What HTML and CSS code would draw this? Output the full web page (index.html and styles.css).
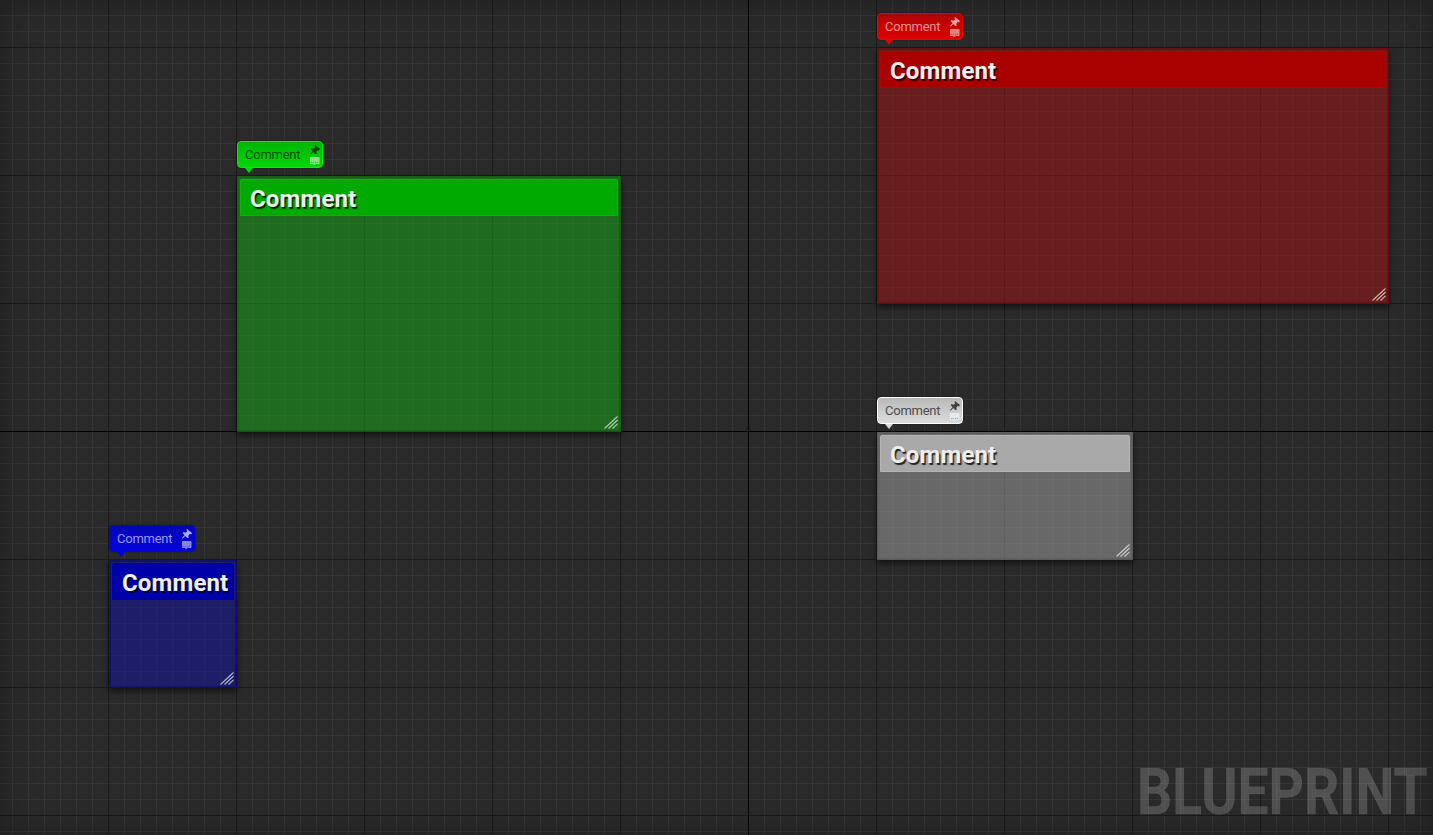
FILE: index.html
```html
<!DOCTYPE html>
<html lang="en">
<head>
<meta charset="utf-8">
<title>Blueprint</title>
<link rel="stylesheet" href="styles.css">
</head>
<body>
<svg class="symbols" aria-hidden="true">
  <symbol id="pin" viewBox="0 0 10 10"><path d="M5 0 10 4 9 5.500 7.800 5 6.500 6.300 6.500 9 5.300 9 3.300 7 .8 9.600 0 9.500.2 8.700 2.600 6.200.8 4.200 1 3.300 4 3.500 5.200 2.200 4.500.8Z" fill="currentColor"/></symbol>
  <symbol id="bubble" viewBox="0 0 10 9"><path d="M.5 0h8.500l.5.500v6l-.5.500H5L4 8.500 3 7H.5L0 6.500v-6Z" fill="currentColor"/><path d="M1 5.500h1.500m.7 0h1m.7 0h1m.7 0h1.500" stroke="#000" stroke-opacity=".3"/></symbol>
  <symbol id="grip" viewBox="0 0 14 13"><path d="M.5 12.500 13.500.5M4.500 12.500 13.500 4M8.500 12.500l5-4.700" fill="none" stroke="currentColor" stroke-width="1.150"/></symbol>
</svg>
<main class="graph">
  <section class="node green">
    <div class="tag"><span>Comment</span><div class="icons"><svg class="pin"><use href="#pin"/></svg><svg class="bubble"><use href="#bubble"/></svg></div></div>
    <div class="box"><h2>Comment</h2><svg class="grip"><use href="#grip"/></svg></div>
  </section>
  <section class="node red">
    <div class="tag"><span>Comment</span><div class="icons"><svg class="pin"><use href="#pin"/></svg><svg class="bubble"><use href="#bubble"/></svg></div></div>
    <div class="box"><h2>Comment</h2><svg class="grip"><use href="#grip"/></svg></div>
  </section>
  <section class="node gray">
    <div class="tag"><span>Comment</span><div class="icons"><svg class="pin"><use href="#pin"/></svg><svg class="bubble"><use href="#bubble"/></svg></div></div>
    <div class="box"><h2>Comment</h2><svg class="grip"><use href="#grip"/></svg></div>
  </section>
  <section class="node blue">
    <div class="tag"><span>Comment</span><div class="icons"><svg class="pin"><use href="#pin"/></svg><svg class="bubble"><use href="#bubble"/></svg></div></div>
    <div class="box"><h2>Comment</h2><svg class="grip"><use href="#grip"/></svg></div>
  </section>
  <div class="watermark">BLUEPRINT</div>
</main>
</body>
</html>
```
FILE: styles.css
```css
body { margin: 0; font-family: Roboto, sans-serif; }
.symbols { position: absolute; width: 0; height: 0; }
.graph {
  position: relative;
  width: 1433px;
  height: 835px;
  overflow: hidden;
  background-color: #2a2a2a;
  background-image:
    linear-gradient(#000, #000),
    linear-gradient(#000, #000),
    linear-gradient(90deg, #1b1b1b 1px, transparent 1px),
    linear-gradient(#1b1b1b 1px, transparent 1px),
    linear-gradient(90deg, #353535 1px, transparent 1px),
    linear-gradient(#353535 1px, transparent 1px);
  background-size: 1px 100%, 100% 1px, 128px 128px, 128px 128px, 16px 16px, 16px 16px;
  background-position: 748px 0, 0 431px, 108px 47px, 108px 47px, 12px 15px, 12px 15px;
  background-repeat: no-repeat, no-repeat, repeat, repeat, repeat, repeat;
}
.graph::after {
  content: "";
  position: absolute;
  inset: 0;
  box-shadow: inset 0 0 36px rgba(0, 0, 0, .3);
  pointer-events: none;
}
.node { position: absolute; display: flex; flex-direction: column; gap: 8px; }
.green { left: 237px; top: 141px; width: 384px; height: 291px; --edge: #00ee08; --top: #00b406; --bottom: #00d807; --head: #00aa00; --rim: #08b408; --fill: rgba(22, 160, 22, .55); --border: rgba(20, 85, 20, .45); --ink: #075307; --pin: #064406; --bubble: #80e480; }
.red { left: 877px; top: 13px; width: 512px; height: 291px; --edge: #f50000; --top: #b90505; --bottom: #dc0404; --head: #a90000; --rim: #b00404; --fill: rgba(154, 20, 20, .55); --border: rgba(100, 0, 0, .4); --ink: #ec9292; --pin: #f0a5a5; --bubble: #e98080; }
.gray { left: 877px; top: 397px; width: 256px; height: 163px; --edge: #fff; --top: #b9b9b9; --bottom: #dcdcdc; --head: #a9a9a9; --rim: #b4b4b4; --fill: rgba(155, 155, 155, .55); --border: rgba(80, 80, 80, .4); --ink: #4d4d4d; --pin: #404040; --bubble: #e5ebef; }
.blue { left: 109px; top: 525px; width: 128px; height: 163px; --edge: #0000f0; --top: #0505b4; --bottom: #0404dc; --head: #0000a9; --rim: #0000ac; --fill: rgba(20, 20, 154, .55); --border: rgba(0, 0, 110, .4); --ink: #9999ee; --pin: #adadf0; --bubble: #8585ed; }
.tag {
  position: relative;
  box-sizing: border-box;
  display: flex;
  justify-content: space-between;
  width: 86px;
  height: 27px;
  padding: 3px 2px 0 7px;
  border: 1px solid var(--edge);
  border-radius: 4px;
  background: linear-gradient(var(--top), var(--bottom));
  box-shadow: 0 0 2px rgba(0, 0, 0, .5);
  color: var(--ink);
  font-size: 13px;
  letter-spacing: -.24px;
  line-height: 19px;
}
.tag::after {
  content: "";
  position: absolute;
  left: 7px;
  top: 26px;
  border: solid transparent;
  border-width: 5px 4px 0;
  border-top-color: var(--bottom);
}
.icons { display: flex; flex-direction: column; gap: 2px; width: 10px; }
.pin { width: 10px; height: 10px; color: var(--pin); }
.bubble { width: 10px; height: 9px; color: var(--bubble); }
.box {
  box-sizing: border-box;
  flex: 1;
  display: flex;
  flex-direction: column;
  justify-content: space-between;
  width: 100%;
  padding: 3px;
  border-radius: 1px;
  background: var(--fill);
  box-shadow: inset 0 0 0 2px var(--border), 0 3px 6px rgba(0, 0, 0, .6);
}
.box h2 {
  box-sizing: border-box;
  height: 37px;
  margin: 0;
  padding-left: 9px;
  border: 1px solid var(--rim);
  border-radius: 2px 2px 0 0;
  background: var(--head);
  color: #eee;
  font-size: 24px;
  font-weight: 700;
  letter-spacing: .14px;
  line-height: 39px;
  text-shadow: 1.5px 1.5px 1px rgba(0, 0, 0, .8);
}
.grip { align-self: flex-end; width: 14px; height: 13px; color: rgba(255, 255, 255, .65); }
.watermark {
  position: absolute;
  right: 5px;
  top: 754px;
  color: rgba(255, 255, 255, .18);
  font-size: 65px;
  font-weight: 700;
  line-height: 76px;
  transform: scaleX(.848);
  transform-origin: right;
  -webkit-text-stroke: .5px rgba(255, 255, 255, .08);
}
```
